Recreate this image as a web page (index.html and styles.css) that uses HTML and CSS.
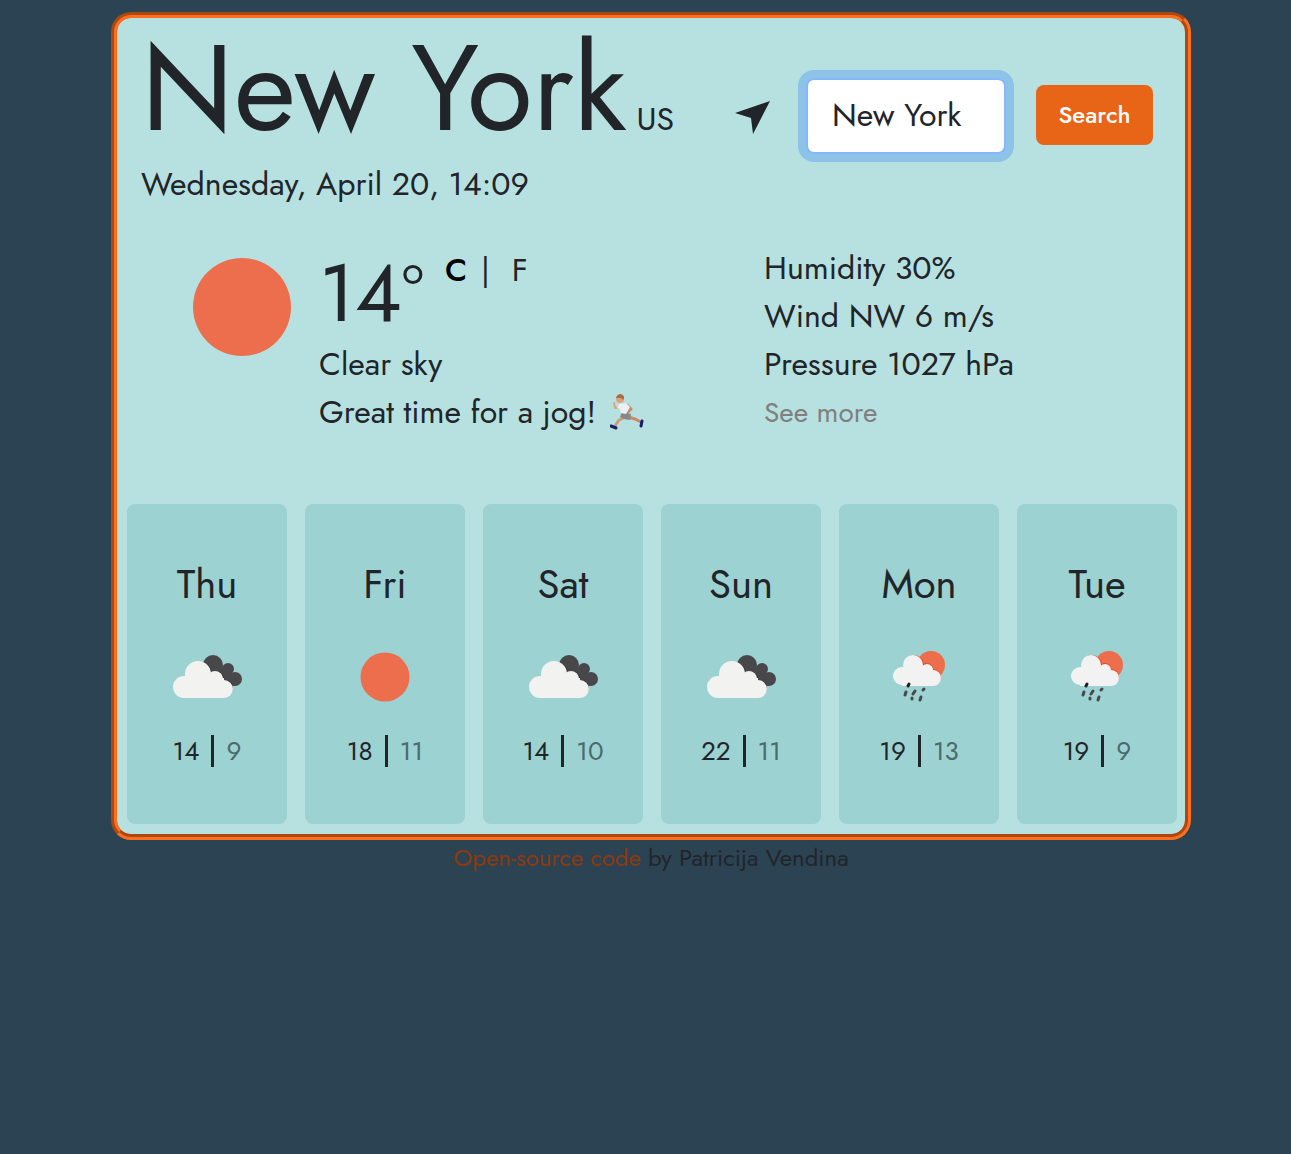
FILE: index.html
```html
<!DOCTYPE html>
<html lang="en">
<head>
<meta charset="utf-8">
<meta name="viewport" content="width=device-width, initial-scale=1">
<title>Weather in New York</title>
<link rel="stylesheet" href="styles.css">
</head>
<body>
<svg class="sprite" aria-hidden="true">
  <symbol id="sun" viewBox="0 0 100 100"><circle cx="50" cy="50" r="49" fill="#ec6e4c"/></symbol>
  <symbol id="clouds" viewBox="-3 0 100 70">
    <g fill="#48484a"><circle cx="53" cy="25" r="10"/><circle cx="68" cy="29" r="6"/><circle cx="75" cy="39" r="7"/><path d="M48 27h22l5 19H55z"/></g>
    <g fill="#303032"><circle cx="40" cy="34" r="12"/><circle cx="56" cy="39" r="8"/><circle cx="65" cy="48" r="8"/></g>
    <g fill="#f2f2f0"><circle cx="38" cy="34" r="13"/><circle cx="55" cy="39" r="8"/><circle cx="64" cy="49" r="9"/><circle cx="24" cy="47" r="11"/><path d="M24 38h40v20H24z"/></g>
  </symbol>
  <symbol id="rain" viewBox="-1 0 100 70">
    <circle cx="61" cy="25" r="14" fill="#ec6e4c"/>
    <g fill="#de4f2b"><circle cx="44" cy="25" r="10"/><circle cx="57" cy="29" r="6"/><circle cx="63" cy="37" r="8"/></g>
    <g fill="#f2f2f2"><circle cx="43" cy="25" r="10"/><circle cx="57" cy="30" r="6"/><circle cx="63" cy="38" r="8"/><circle cx="32" cy="36" r="9"/><path d="M32 27h26l5 19H32z"/></g>
    <g stroke="#48484a" stroke-width="3" stroke-linecap="round"><path d="M39 44l-1 2" stroke="#222"/><path d="M36 52l-1 3M45 51l-2 3M54 49l-1 1M42 58v1M51 57l-1 3"/></g>
  </symbol>
</svg>

<main class="page">
  <section class="card">
    <header class="header">
      <div>
        <div class="place">
          <h1 class="city">New York</h1>
          <span class="country">US</span>
        </div>
        <p class="date">Wednesday, April 20, 14:09</p>
      </div>
      <form class="search">
        <button class="locate" type="button" aria-label="Use my location">
          <svg class="arrow" viewBox="0 0 35 33"><path d="M35 0L18 33 16 17 0 12z" fill="#212529"/></svg>
        </button>
        <input class="query" type="text" value="New York" aria-label="City">
        <button class="submit" type="submit">Search</button>
      </form>
    </header>

    <div class="now">
      <svg class="now-icon"><use href="#sun"/></svg>
      <div class="summary">
        <div class="reading">
          <span class="degrees">14º</span>
          <span class="units"><a class="unit unit-active" href="#c">C</a><span class="divider">|</span><a class="unit" href="#f">F</a></span>
        </div>
        <p>Clear sky</p>
        <p class="advice">Great time for a jog!
          <svg class="runner" viewBox="0 0 34 36">
            <g fill="none" stroke-linecap="round" stroke-linejoin="round">
              <path d="M18 22L9 26 5 32" stroke="#d39a76" stroke-width="3"/>
              <path d="M18 23L25 25 31 28" stroke="#c88a65" stroke-width="3"/>
              <path d="M10 13L5 14 4 9" stroke="#dda37e" stroke-width="2"/>
              <path d="M17 11L21 15 17 19" stroke="#c88a65" stroke-width="3"/>
              <path d="M1 32l5 2" stroke="#171f68" stroke-width="3"/>
              <path d="M32 27l-1 5" stroke="#171f68" stroke-width="3"/>
            </g>
            <path d="M12 18l9 2-1 6-6-1-4-2z" fill="#858789"/>
            <path d="M9 10l7-1 4 4-4 7-5-1-1-4-3-1z" fill="#eeeff2"/>
            <circle cx="10" cy="5" r="4" fill="#dda37e"/>
            <path d="M6 4Q7 0 11 0 16 2 13 6L11 4z" fill="#a96e3c"/>
          </svg>
        </p>
      </div>
      <div class="details">
        <p>Humidity 30%</p>
        <p>Wind NW 6 m/s</p>
        <p>Pressure 1027 hPa</p>
        <a class="more" href="#more">See more</a>
      </div>
    </div>

    <ul class="forecast">
      <li class="day"><h2 class="name">Thu</h2><svg class="icon"><use href="#clouds"/></svg><p class="temps">14<span class="bar"></span><span class="low">9</span></p></li>
      <li class="day"><h2 class="name">Fri</h2><svg class="icon icon-sun"><use href="#sun"/></svg><p class="temps">18<span class="bar"></span><span class="low">11</span></p></li>
      <li class="day"><h2 class="name">Sat</h2><svg class="icon"><use href="#clouds"/></svg><p class="temps">14<span class="bar"></span><span class="low">10</span></p></li>
      <li class="day"><h2 class="name">Sun</h2><svg class="icon"><use href="#clouds"/></svg><p class="temps">22<span class="bar"></span><span class="low">11</span></p></li>
      <li class="day"><h2 class="name">Mon</h2><svg class="icon"><use href="#rain"/></svg><p class="temps">19<span class="bar"></span><span class="low">13</span></p></li>
      <li class="day"><h2 class="name">Tue</h2><svg class="icon"><use href="#rain"/></svg><p class="temps">19<span class="bar"></span><span class="low">9</span></p></li>
    </ul>
  </section>
  <footer class="footer"><a class="source" href="#source">Open-source code</a> by Patricija Vendina</footer>
</main>
</body>
</html>
```
FILE: styles.css
```css
* { box-sizing: border-box; }
body {
  margin: 0;
  padding: 12px 0 0 11px;
  background: #2c4354;
  color: #212529;
  font: 32px/48px Jost, Lato, sans-serif;
}
h1, h2, p, ul { margin: 0; padding: 0; font-weight: 400; }
ul { list-style: none; }
a { color: inherit; text-decoration: none; }
button { border: 0; padding: 0; font: inherit; cursor: pointer; }
.sprite { position: absolute; width: 0; height: 0; }

.page { max-width: 1080px; margin: 0 auto; }
.card {
  border: 6px groove #ff6e1c;
  border-radius: 20px;
  background: #b7e1e0;
}

.header {
  display: flex;
  justify-content: space-between;
  padding: 0 32px 0 24px;
}
.place { display: flex; align-items: baseline; gap: 10px; white-space: nowrap; }
.city { font-size: 120px; line-height: 142px; }
.search { display: flex; align-items: center; height: 76px; margin-top: 60px; }
.locate { display: flex; margin: 2px 36px 0 0; background: none; }
.arrow { width: 35px; height: 33px; }
.query {
  width: 200px;
  height: 76px;
  margin-right: 30px;
  padding: 0 24px 2px;
  border: 2px solid #86b7fe;
  border-radius: 8px;
  outline: 0;
  background: #fff;
  box-shadow: 0 0 0 8px #8dc3e7;
  color: #212529;
  font: inherit;
}
.submit {
  width: 117px;
  height: 60px;
  margin-bottom: 2px;
  border-radius: 8px;
  background: #e86416;
  color: #fff;
  font-size: 24px;
  font-weight: 500;
}

.now {
  display: grid;
  grid-template-columns: 100px 418px 1fr;
  column-gap: 27px;
  padding: 36px 24px 0 75px;
}
.now-icon { width: 100px; height: 100px; margin-top: 13px; }
.reading { display: flex; height: 96px; }
.degrees { font-size: 80px; line-height: 98px; }
.units { display: flex; margin: 2px 0 0 21px; }
.unit-active { color: #000; font-weight: 500; }
.divider { margin: 0 22px 0 14px; }
.advice { display: flex; align-items: center; gap: 14px; }
.runner { width: 34px; height: 36px; }
.more { display: block; color: #808080; font-size: 28px; line-height: 50px; }

.forecast {
  display: grid;
  grid-template-columns: repeat(6, 1fr);
  gap: 18px;
  padding: 66px 8px 10px 10px;
}
.day {
  display: flex;
  flex-direction: column;
  align-items: center;
  height: 320px;
  padding-top: 56px;
  border-radius: 8px;
  background: #9dd2d2;
}
.name { font-size: 40px; }
.icon { width: 100px; height: 70px; margin: 32px 0 17px; }
.icon-sun { height: 50px; margin: 44px 0 25px; }
.temps { display: flex; align-items: center; font-size: 26px; }
.bar { width: 3px; height: 32px; margin: 0 12px; background: #212529; }
.low { color: #4b6a6c; }

.footer { color: #212529; font-size: 24px; line-height: 36px; text-align: center; }
.source { color: #8b3a0e; }
```
